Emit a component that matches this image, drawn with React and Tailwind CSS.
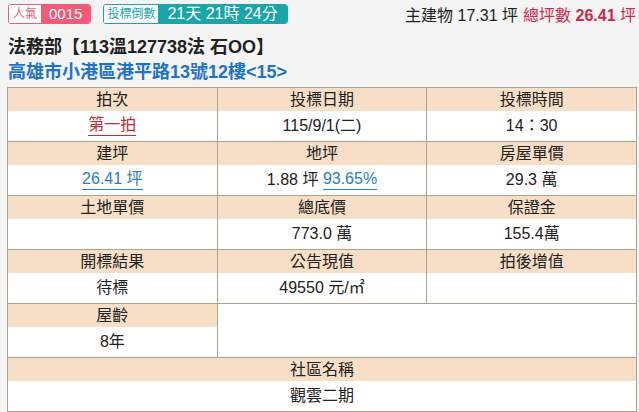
import React from "react";

const FONT = { fontFamily: '"Liberation Sans", "Noto Sans CJK TC", sans-serif' };

function Cell({ head, children, colSpan }) {
  return (
    <td colSpan={colSpan} className="border border-[#aaa38f] p-0 align-top">
      <div className="h-[23px] bg-[#f6dfc6] flex items-center justify-center text-[16px] text-[#222] leading-none">
        {head}
      </div>
      <div className="h-[30px] flex items-center justify-center text-[16px] text-[#222] leading-none">
        {children}
      </div>
    </td>
  );
}

export default function App() {
  return (
    <div className="w-[639px] h-[412px] bg-[#f4f4f4] overflow-hidden" style={FONT}>
      <div className="flex items-center justify-between pl-2 pr-[3px] pt-1 h-[24px]">
        <div className="flex items-center gap-3">
          <div className="flex h-[20px] rounded-[3px] overflow-hidden border border-[#f25a78]">
            <span className="bg-white text-[#f25a78] text-[12px] px-[4px] flex items-center">人氣</span>
            <span className="bg-[#f25a78] text-white text-[15px] px-[8px] flex items-center">0015</span>
          </div>
          <div className="flex h-[20px] rounded-[3px] overflow-hidden border border-[#1aa6a8]">
            <span className="bg-white text-[#1aa6a8] text-[12px] px-[3px] flex items-center">投標倒數</span>
            <span className="bg-[#1aa6a8] text-white text-[16px] px-[9px] flex items-center">21天 21時 24分</span>
          </div>
        </div>
        <div className="text-[16px] text-[#222] flex items-center gap-[5px] pt-[3px]">
          <span>主建物 17.31 坪</span>
          <span className="text-[#d0284c]">
            總坪數 <b>26.41</b> 坪
          </span>
        </div>
      </div>
      <div className="pl-2 mt-[12px] text-[18px] font-bold text-[#222] leading-[22px]">
        法務部【113溫127738法 石OO】
      </div>
      <div className="pl-2 mt-[3px] text-[18px] font-bold text-[#1f73c7] leading-[22px]">
        高雄市小港區港平路13號12樓&lt;15&gt;
      </div>
      <div className="pl-[7px] pr-[2px] mt-[4px]">
        <table className="w-[630px] border-collapse table-fixed bg-white">
          <tbody>
            <tr>
              <Cell head="拍次">
                <span className="text-[#c62b33] border-b border-[#c62b33] pb-[2px]">第一拍</span>
              </Cell>
              <Cell head="投標日期">115/9/1(二)</Cell>
              <Cell head="投標時間">14：30</Cell>
            </tr>
            <tr>
              <Cell head="建坪">
                <span className="text-[#2a7cc6] border-b border-[#2a7cc6] pb-[2px]">26.41 坪</span>
              </Cell>
              <Cell head="地坪">
                <span>1.88 坪&nbsp;</span>
                <span className="text-[#2a7cc6] border-b border-[#2a7cc6] pb-[2px]">93.65%</span>
              </Cell>
              <Cell head="房屋單價">29.3 萬</Cell>
            </tr>
            <tr>
              <Cell head="土地單價"></Cell>
              <Cell head="總底價">773.0 萬</Cell>
              <Cell head="保證金">155.4萬</Cell>
            </tr>
            <tr>
              <Cell head="開標結果">待標</Cell>
              <Cell head="公告現值">49550 元/㎡</Cell>
              <Cell head="拍後增值"></Cell>
            </tr>
            <tr>
              <Cell head="屋齡">8年</Cell>
              <td colSpan={2} className="border border-[#aaa38f] p-0"></td>
            </tr>
            <tr>
              <Cell head="社區名稱" colSpan={3}>觀雲二期</Cell>
            </tr>
          </tbody>
        </table>
      </div>
    </div>
  );
}
